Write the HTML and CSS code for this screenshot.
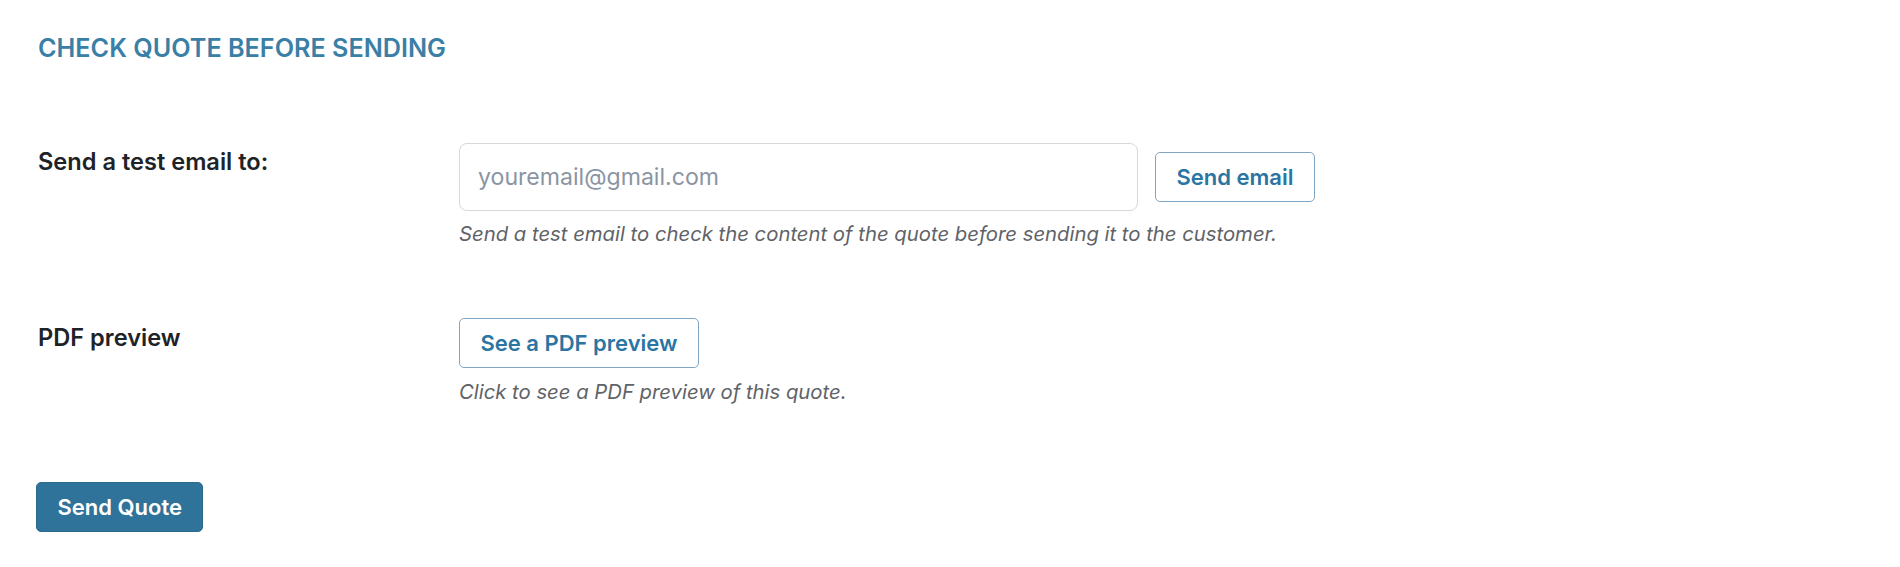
FILE: index.html
```html
<!DOCTYPE html>
<html lang="en">
<head>
<meta charset="utf-8">
<title>Check quote before sending</title>
<link rel="stylesheet" href="styles.css">
</head>
<body>
<div class="page">
  <h2 class="title">Check quote before sending</h2>
  <div class="form">
    <div class="row row-email">
      <div class="label">Send a test email to:</div>
      <div class="field">
        <div class="inline">
          <input class="input" type="email" placeholder="youremail@gmail.com">
          <button class="btn btn-secondary" type="button">Send email</button>
        </div>
        <p class="desc">Send a test email to check the content of the quote before sending it to the customer.</p>
      </div>
    </div>
    <div class="row row-pdf">
      <div class="label">PDF preview</div>
      <div class="field">
        <button class="btn btn-secondary btn-pdf" type="button">See a PDF preview</button>
        <p class="desc">Click to see a PDF preview of this quote.</p>
      </div>
    </div>
  </div>
  <button class="btn btn-primary" type="button">Send Quote</button>
</div>
</body>
</html>
```
FILE: styles.css
```css
* { box-sizing: border-box; }
html, body { margin: 0; padding: 0; background: #ffffff; }
body {
  font-family: Inter, "Noto Sans", "Liberation Sans", sans-serif;
  color: #1d2327;
}
.page {
  padding: 34px 0 0 38px;
  display: flex;
  flex-direction: column;
  align-items: flex-start;
}
.title {
  margin: 0;
  font-size: 25.2px;
  line-height: 28px;
  font-weight: 600;
  text-transform: uppercase;
  color: #3a80a6;
}
.form {
  margin-top: 81px;
  display: flex;
  flex-direction: column;
  gap: 72px;
}
.row {
  display: grid;
  grid-template-columns: 421px auto;
}
.label {
  font-size: 23.6px;
  line-height: 28px;
  font-weight: 600;
  color: #1d2327;
}
.row-email .label { padding-top: 5px; }
.row-pdf .label { padding-top: 6px; }
.inline {
  display: flex;
  align-items: center;
  gap: 17px;
}
.input {
  width: 679px;
  height: 68px;
  border: 1px solid #d5d8dc;
  border-radius: 8px;
  padding: 0 18px;
  font-family: inherit;
  font-size: 23.1px;
  color: #1d2327;
  background: #fff;
  outline: none;
}
.input::placeholder { color: #8a94a3; }
.btn {
  font-family: inherit;
  font-size: 22px;
  font-weight: 600;
  height: 50px;
  border-radius: 5px;
  cursor: pointer;
  line-height: 1;
}
.btn-secondary {
  background: #fff;
  color: #2b75a3;
  border: 1px solid #7ea6c4;
  padding: 0 20.5px;
}
.desc {
  margin: 11px 0 0;
  font-size: 20.3px;
  line-height: 24px;
  font-style: italic;
  color: #5f6368;
}
.row-pdf .desc { margin-top: 12px; }
.btn-primary {
  margin-top: 78px;
  margin-left: -2px;
  background: #30739a;
  color: #fff;
  border: 1px solid #2a6a8f;
  padding: 0 20.5px;
}
```
